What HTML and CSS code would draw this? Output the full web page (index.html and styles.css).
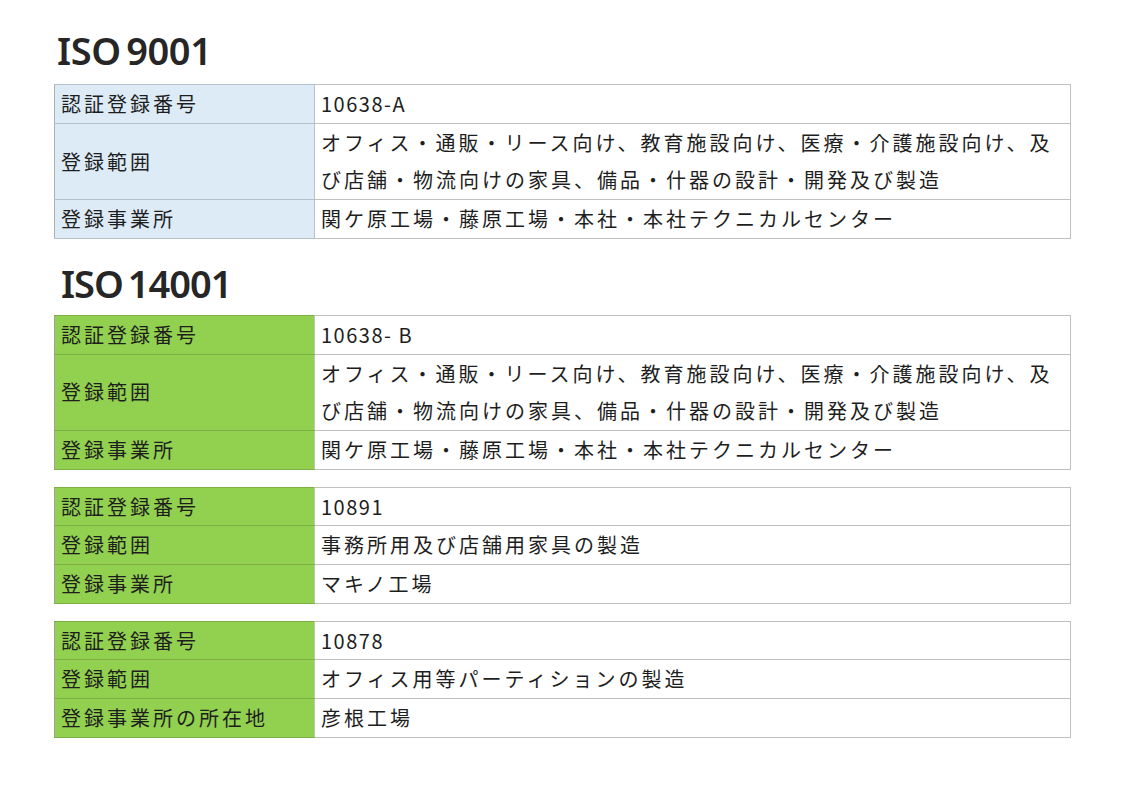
FILE: index.html
```html
<!DOCTYPE html>
<html lang="ja">
<head>
<meta charset="utf-8">
<title>ISO</title>
<link rel="stylesheet" href="styles.css">
</head>
<body>
<div class="page">
  <h2 class="iso-title t1">ISO 9001</h2>
  <table class="cert blue">
    <tr><th>認証登録番号</th><td class="num">10638-A</td></tr>
    <tr><th>登録範囲</th><td>オフィス・通販・リース向け、教育施設向け、医療・介護施設向け、及び店舗・物流向けの家具、備品・什器の設計・開発及び製造</td></tr>
    <tr><th>登録事業所</th><td>関ケ原工場・藤原工場・本社・本社テクニカルセンター</td></tr>
  </table>

  <h2 class="iso-title t2">ISO 14001</h2>
  <table class="cert green">
    <tr><th>認証登録番号</th><td class="num">10638- B</td></tr>
    <tr><th>登録範囲</th><td>オフィス・通販・リース向け、教育施設向け、医療・介護施設向け、及び店舗・物流向けの家具、備品・什器の設計・開発及び製造</td></tr>
    <tr><th>登録事業所</th><td>関ケ原工場・藤原工場・本社・本社テクニカルセンター</td></tr>
  </table>
  <table class="cert green">
    <tr><th>認証登録番号</th><td class="num">10891</td></tr>
    <tr><th>登録範囲</th><td>事務所用及び店舗用家具の製造</td></tr>
    <tr><th>登録事業所</th><td>マキノ工場</td></tr>
  </table>
  <table class="cert green">
    <tr><th>認証登録番号</th><td class="num">10878</td></tr>
    <tr><th>登録範囲</th><td>オフィス用等パーティションの製造</td></tr>
    <tr><th>登録事業所の所在地</th><td>彦根工場</td></tr>
  </table>
</div>
</body>
</html>
```
FILE: styles.css
```css
html, body {
  margin: 0;
  padding: 0;
  background: #ffffff;
}
.page {
  padding: 30px 0 0 54px;
  width: 1017px;
  font-family: "Noto Sans CJK JP", "Noto Sans", sans-serif;
  color: #1e1e1e;
}
.iso-title {
  margin: 0;
  font-family: "Noto Sans", "DejaVu Sans", sans-serif;
  font-weight: 600;
  font-size: 38px;
  line-height: 40px;
  letter-spacing: -0.4px;
  word-spacing: -4px;
  color: #262626;
  padding-left: 3px;
  height: 54px;
}
.t2 {
  margin-top: 22px;
  padding-top: 2px;
  height: 52px;
  padding-left: 7px;
  letter-spacing: -1px;
}
.cert {
  width: 1017px;
  border-collapse: collapse;
  table-layout: fixed;
  font-size: 20px;
  letter-spacing: 3px;
  line-height: 37.7px;
  margin-bottom: 17px;
}
.cert th, .cert td {
  border: 1px solid #c0c0c0;
  padding: 0 5px 0 6px;
  text-align: left;
  font-weight: 400;
  vertical-align: middle;
}
.cert th {
  width: 248px;
}
.cert td.num {
  letter-spacing: 1.5px;
}
.blue th {
  background: #ddebf7;
  border-color: #b4c0cc #c0c0c0 #b4c0cc #b0b0b0;
}
.green th {
  background: #92d050;
  border-color: #7cb044 #c0c0c0 #7cb044 #a0a0a0;
}
```
